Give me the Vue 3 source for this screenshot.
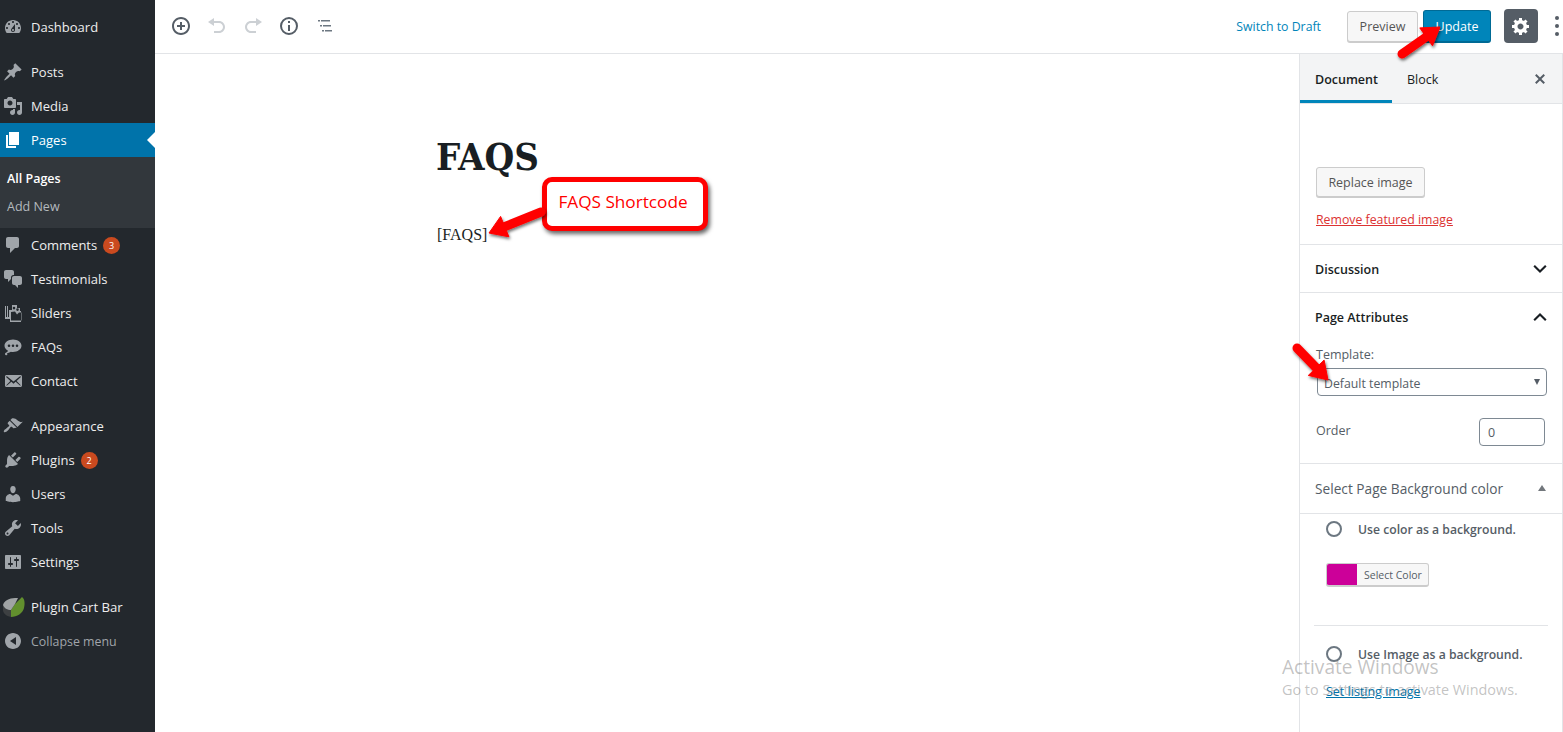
<script setup>
const I = {
  dashboard: 'M3.76 16h12.48c1.1-1.37 1.76-3.11 1.76-5 0-4.42-3.58-8-8-8s-8 3.58-8 8c0 1.89.66 3.63 1.76 5zM10 4c.55 0 1 .45 1 1s-.45 1-1 1-1-.45-1-1 .45-1 1-1zM6 6c.55 0 1 .45 1 1s-.45 1-1 1-1-.45-1-1 .45-1 1-1zm8 0c.55 0 1 .45 1 1s-.45 1-1 1-1-.45-1-1 .45-1 1-1zm-5.37 5.55L12 7v6c0 1.1-.9 2-2 2s-2-.9-2-2c0-.57.24-1.08.63-1.45zM4 10c.55 0 1 .45 1 1s-.45 1-1 1-1-.45-1-1 .45-1 1-1zm12 0c.55 0 1 .45 1 1s-.45 1-1 1-1-.45-1-1 .45-1 1-1zm-5 3c0-.55-.45-1-1-1s-1 .45-1 1 .45 1 1 1 1-.45 1-1z',
  pin: 'M10.44 3.02l1.82-1.82 6.36 6.35-1.83 1.82c-1.05-.68-2.48-.57-3.41.36l-.75.75c-.92.93-1.04 2.35-.35 3.41l-1.83 1.82-2.41-2.41-2.8 2.79c-.42.42-3.38 2.71-3.8 2.29s1.86-3.39 2.28-3.81l2.79-2.79L4.1 9.36l1.83-1.82c1.05.69 2.48.57 3.4-.36l.75-.75c.93-.92 1.05-2.35.36-3.41z',
  media: 'M13 11V4c0-.55-.45-1-1-1h-1.67L9 1H5L3.67 3H2c-.55 0-1 .45-1 1v7c0 .55.45 1 1 1h10c.55 0 1-.45 1-1zM7 4.5c1.38 0 2.5 1.12 2.5 2.5S8.38 9.5 7 9.5 4.5 8.38 4.5 7 5.62 4.5 7 4.5zM14 6h5v10.5c0 1.38-1.12 2.5-2.5 2.5S14 17.88 14 16.5s1.12-2.5 2.5-2.5c.17 0 .34.02.5.05V9h-3V6zm-4 8.05V13h2v3.5c0 1.38-1.12 2.5-2.5 2.5S7 17.88 7 16.5 8.12 14 9.5 14c.17 0 .34.02.5.05z',
  page: 'M6 15V2h10v13H6zm-1 1h8v2H3V5h2v11z',
  comment: 'M5 2h9c1.1 0 2 .9 2 2v7c0 1.1-.9 2-2 2h-2l-5 5v-5H5c-1.1 0-2-.9-2-2V4c0-1.1.9-2 2-2z',
  chat: 'M11 6h-.82C9.07 6 8 7.2 8 8.16V10l-3 3v-3H3c-1.1 0-2-.9-2-2V3c0-1.1.9-2 2-2h6c1.1 0 2 .9 2 2v3zm0 1h6c1.1 0 2 .9 2 2v5c0 1.1-.9 2-2 2h-2v3l-3-3h-1c-1.1 0-2-.9-2-2V9c0-1.1.9-2 2-2z',
  slides: 'M2 3h1v11h1V3h1v11h1V7h3V2h5v3h3v3h1v11H7v-3H2zM8 9v8.500h10.500V9.500H16l-2 2-2-3zM11 3.800a1.300 1.300 0 1 0 0 2.600 1.300 1.300 0 0 0 0-2.600zm3.500 1.500a1.300 1.300 0 1 0 0 2.600 1.300 1.300 0 0 0 0-2.600z',
  bubble: 'M10 2.5c-4.7 0-8.500 2.800-8.500 6.200 0 2.100 1.400 3.900 3.500 5-.4 1-1.300 1.900-2.500 2.300 2 .3 4-.3 5.400-1.300.7.100 1.400.2 2.100.2 4.700 0 8.500-2.800 8.500-6.200S14.700 2.500 10 2.500zM6 7.500a1.300 1.300 0 1 1 0 2.600 1.300 1.300 0 0 1 0-2.600zm4 0a1.300 1.300 0 1 1 0 2.600 1.300 1.300 0 0 1 0-2.600zm4 0a1.300 1.300 0 1 1 0 2.600 1.300 1.300 0 0 1 0-2.600zM2 17a1.200 1.200 0 1 0 2.400 0A1.200 1.200 0 0 0 2 17z',
  mail: 'M19 14.5v-9c0-.83-.67-1.5-1.500-1.500H3.490c-.83 0-1.500.67-1.500 1.500v9c0 .83.67 1.500 1.500 1.500H17.500c.83 0 1.500-.67 1.500-1.500zm-1.310-9.110c.33.33.15.67-.03.84L13.600 9.950l3.900 4.060c.12.14.2.36.06.51-.13.16-.43.15-.56.05l-4.370-3.730-2.140 1.950-2.130-1.950-4.370 3.730c-.13.1-.43.11-.56-.05-.14-.15-.06-.37.06-.51l3.900-4.060-4.060-3.720c-.18-.17-.36-.51-.03-.84s.67-.17.95.07l6.240 5.040 6.250-5.040c.28-.24.62-.4.95-.07z',
  brush: 'M14.480 11.060L7.410 3.990l1.500-1.500c.5-.56 2.300-.47 3.510.32 1.210.8 1.430 1.280 2.910 2.100 1.180.64 2.450 1.260 4.450.85zm-.71.71L6.700 4.700 4.930 6.470c-.39.39-.39 1.020 0 1.410l1.060 1.060c.39.39.39 1.030 0 1.420-.6.6-1.430 1.110-2.210 1.690-.35.26-.7.53-1.010.84C1.430 13.230.2 15.200 1 16c.8.800 2.770-.43 4.110-1.770.31-.31.58-.66.84-1.010.58-.78 1.090-1.610 1.690-2.210.39-.39 1.030-.39 1.420 0l1.060 1.060c.39.39 1.020.39 1.410 0z',
  plug: 'M13.110 4.360L9.870 7.600 8 5.730l3.240-3.240c.35-.34 1.050-.2 1.560.32.52.51.66 1.210.31 1.550zm-8 1.770l.91-1.120 9.010 9.010-1.190.84c-.71.71-2.630 1.160-3.820 1.160H6.140L4.900 17.260c-.59.59-1.540.59-2.120 0-.59-.58-.59-1.530 0-2.120l1.240-1.240v-3.880c0-1.130.4-3.190 1.090-3.890zm7.260 3.970l3.240-3.240c.34-.35 1.040-.21 1.550.31.52.51.66 1.210.31 1.550l-3.240 3.250z',
  user: 'M10 9.250c-2.270 0-2.730-3.440-2.730-3.440C7 4.020 7.820 2 9.970 2c2.160 0 2.980 2.020 2.710 3.810 0 0-.41 3.440-2.680 3.440zm0 2.570L12.720 10c2.390 0 4.520 2.330 4.520 4.530v2.490s-3.650 1.130-7.240 1.130c-3.650 0-7.240-1.130-7.240-1.130v-2.490c0-2.250 1.940-4.480 4.470-4.480z',
  tool: 'M16.680 9.770c-1.340 1.340-3.300 1.670-4.950.99l-5.410 6.520c-.99.99-2.590.99-3.580 0s-.99-2.590 0-3.570l6.520-5.420c-.68-1.650-.35-3.610.99-4.950 1.280-1.280 3.120-1.620 4.720-1.060l-2.890 2.890 2.820 2.820 2.860-2.870c.53 1.580.18 3.390-1.080 4.650zM3.810 16.210c.4.39 1.040.39 1.430 0 .4-.4.4-1.040 0-1.430-.39-.4-1.030-.4-1.430 0-.39.39-.39 1.030 0 1.430z',
  settings: 'M18 16V4c0-.55-.45-1-1-1H3c-.55 0-1 .45-1 1v12c0 .55.45 1 1 1h14c.55 0 1-.45 1-1zM8 11h1c.55 0 1 .45 1 1s-.45 1-1 1H8v1.500c0 .28-.22.5-.5.5s-.5-.22-.5-.5V13H6c-.55 0-1-.45-1-1s.45-1 1-1h1V5.500c0-.28.22-.5.5-.5s.5.22.5.5V11zm5-2h-1c-.55 0-1-.45-1-1s.45-1 1-1h1V5.500c0-.28.22-.5.5-.5s.5.22.5.5V7h1c.55 0 1 .45 1 1s-.45 1-1 1h-1v5.500c0 .28-.22.5-.5.5s-.5-.22-.5-.5V9z',
  collapse: 'M18 10c0-4.420-3.580-8-8-8s-8 3.580-8 8 3.580 8 8 8 8-3.580 8-8zm-5-4v8L7 10z'
}
const groups = [
  [{ label: 'Dashboard', icon: I.dashboard }],
  [
    { label: 'Posts', icon: I.pin },
    { label: 'Media', icon: I.media },
    { label: 'Pages', icon: I.page, active: true, sub: ['All Pages', 'Add New'] },
    { label: 'Comments', icon: I.comment, badge: 3 },
    { label: 'Testimonials', icon: I.chat },
    { label: 'Sliders', icon: I.slides },
    { label: 'FAQs', icon: I.bubble },
    { label: 'Contact', icon: I.mail }
  ],
  [
    { label: 'Appearance', icon: I.brush },
    { label: 'Plugins', icon: I.plug, badge: 2 },
    { label: 'Users', icon: I.user },
    { label: 'Tools', icon: I.tool },
    { label: 'Settings', icon: I.settings }
  ]
]
const toolIcons = [
  { d: 'M10 1c-5 0-9 4-9 9s4 9 9 9 9-4 9-9-4-9-9-9zm0 16c-3.900 0-7-3.100-7-7s3.100-7 7-7 7 3.100 7 7-3.100 7-7 7zm1-11H9v3H6v2h3v3h2v-3h3V9h-3V6z', off: false },
  { d: 'M12 5H7V2L1 6l6 4V7h5c2.200 0 4 1.800 4 4s-1.800 4-4 4H7v2h5c3.300 0 6-2.700 6-6s-2.700-6-6-6z', off: true },
  { d: 'M8 5h5V2l6 4-6 4V7H8c-2.200 0-4 1.800-4 4s1.800 4 4 4h5v2H8c-3.300 0-6-2.700-6-6s2.700-6 6-6z', off: true },
  { d: 'M10 1a9 9 0 1 0 0 18 9 9 0 0 0 0-18zm0 16a7 7 0 1 1 0-14 7 7 0 0 1 0 14zM9 9h2v6H9zM9 5h2v2H9z', off: false },
  { d: 'M3 4h2v1.500H3zM6 4h9v1.500H6zM5 9h2v1.500H5zM8 9h8v1.500H8zM7 14h2v1.500H7zM10 14h7v1.500h-7z', off: false, muted: true }
]
function arrow(x1, y1, x2, y2, w, hl, hw) {
  const len = Math.hypot(x2 - x1, y2 - y1)
  const ux = (x2 - x1) / len, uy = (y2 - y1) / len
  const px = -uy, py = ux
  const nx = x2 - ux * hl, ny = y2 - uy * hl
  const f = n => n.toFixed(1)
  const head = `${f(x2)},${f(y2)} ${f(nx + px * hw)},${f(ny + py * hw)} ${f(nx - px * hw)},${f(ny - py * hw)}`
  return { x1, y1, nx: f(nx + ux), ny: f(ny + uy), w, head }
}
const arrows = [
  arrow(1402, 54, 1440, 27, 9, 17, 11),
  arrow(1297, 348, 1328, 380, 9, 17, 11),
  arrow(541, 212, 489, 233, 9, 17, 11)
]
</script>

<template>
  <div class="page">
    <aside class="sidebar">
      <ul v-for="(group, g) in groups" :key="g" class="menu-group">
        <li v-for="item in group" :key="item.label">
          <div class="menu-item" :class="{ active: item.active }">
            <svg class="menu-icon" viewBox="0 0 20 20"><path :d="item.icon" fill-rule="evenodd" /></svg>
            <span>{{ item.label }}</span>
            <span v-if="item.badge" class="badge">{{ item.badge }}</span>
          </div>
          <ul v-if="item.sub" class="submenu">
            <li v-for="(s, i) in item.sub" :key="s" :class="{ current: i === 0 }">{{ s }}</li>
          </ul>
        </li>
      </ul>
      <ul class="menu-group">
        <li>
          <div class="menu-item cart">
            <svg class="cart-icon" viewBox="0 0 22 22">
              <path d="M0 9v5c0 3 3 6 8 7V14C4 14 1 12 0 9z" fill="#3d4042" />
              <path d="M8 14l4-6 7-7c3 2 3 7 2 11-1 5-7 9-13 9z" fill="#62902e" />
              <path d="M0 9c1-4 6-7 12-7h3l-3 6-4 6C4 14 1 12 0 9z" fill="#a0a4a5" />
            </svg>
            <span>Plugin Cart Bar</span>
          </div>
        </li>
        <li>
          <div class="menu-item collapse">
            <svg class="menu-icon" viewBox="0 0 20 20"><path :d="I.collapse" fill-rule="evenodd" /></svg>
            <span>Collapse menu</span>
          </div>
        </li>
      </ul>
    </aside>

    <div class="main">
      <header class="topbar">
        <div class="tools">
          <button v-for="(t, i) in toolIcons" :key="i" class="tool" :class="{ off: t.off, muted: t.muted }">
            <svg viewBox="0 0 20 20" width="20" height="20"><path :d="t.d" /></svg>
          </button>
        </div>
        <div class="actions">
          <a class="draft">Switch to Draft</a>
          <button class="btn preview">Preview</button>
          <button class="update">Update</button>
          <button class="gear">
            <svg viewBox="0 0 20 20" width="20" height="20"><path fill-rule="evenodd" d="M18 12h-2.180c-.17.7-.44 1.350-.81 1.930l1.540 1.540-2.100 2.100-1.540-1.540c-.58.36-1.230.63-1.910.79V19H8v-2.180c-.68-.16-1.330-.43-1.910-.79l-1.540 1.540-2.120-2.120 1.540-1.540c-.36-.58-.63-1.230-.79-1.910H1V9.030h2.170c.16-.7.44-1.340.8-1.940L2.430 5.550l2.100-2.100 1.540 1.540c.58-.37 1.240-.64 1.930-.81V2h3v2.180c.68.16 1.330.43 1.910.79l1.540-1.540 2.120 2.120-1.540 1.540c.36.580.63 1.230.79 1.910H18V12zm-8.500 1.500c1.660 0 3-1.340 3-3s-1.340-3-3-3-3 1.340-3 3 1.340 3 3 3z" /></svg>
          </button>
          <div class="dots"><i></i><i></i><i></i></div>
        </div>
      </header>

      <div class="workspace">
        <main class="editor">
          <h1>FAQS</h1>
          <p>[FAQS]</p>
        </main>

        <aside class="panel">
          <div class="tabs">
            <div class="tab selected">Document</div>
            <div class="tab">Block</div>
            <svg class="close" viewBox="0 0 20 20" width="20" height="20"><path d="M14.950 6.460L11.410 10l3.540 3.540-1.410 1.410L10 11.420l-3.530 3.530-1.420-1.420L8.580 10 5.050 6.470l1.420-1.420L10 8.580l3.540-3.530z" /></svg>
          </div>

          <section class="featured">
            <button class="btn replace">Replace image</button>
            <a class="remove">Remove featured image</a>
          </section>

          <section class="row-head discussion">
            <span>Discussion</span>
            <svg viewBox="0 0 24 24" width="20" height="20" class="chev"><path d="M5 8l7 7 7-7" /></svg>
          </section>

          <section class="attributes">
            <div class="row-head plain">
              <span>Page Attributes</span>
              <svg viewBox="0 0 24 24" width="20" height="20" class="chev"><path d="M5 16l7-7 7 7" /></svg>
            </div>
            <label class="tpl-label">Template:</label>
            <div class="select"><span>Default template</span><i class="down"></i></div>
            <div class="order">
              <label>Order</label>
              <div class="num">0</div>
            </div>
          </section>

          <section class="bg-head">
            <span>Select Page Background color</span>
            <i class="up"></i>
          </section>

          <section class="bg-body">
            <div class="radio-row"><i class="radio"></i><span>Use color as a background.</span></div>
            <div class="color-btn"><i class="swatch"></i><span>Select Color</span></div>
            <hr />
            <div class="radio-row second"><i class="radio"></i><span>Use Image as a background.</span></div>
            <a class="listing">Set listing image</a>
          </section>
        </aside>
      </div>
    </div>

    <div class="callout">FAQS Shortcode</div>

    <svg class="arrows" width="1563" height="732" viewBox="0 0 1563 732">
      <defs>
        <filter id="sh" x="-30%" y="-30%" width="170%" height="170%">
          <feDropShadow dx="1" dy="2" stdDeviation="1.500" flood-color="#000" flood-opacity=".55" />
        </filter>
      </defs>
      <g v-for="(a, i) in arrows" :key="i" filter="url(#sh)" fill="#f00" stroke="#f00">
        <line :x1="a.x1" :y1="a.y1" :x2="a.nx" :y2="a.ny" :stroke-width="a.w" stroke-linecap="round" />
        <polygon :points="a.head" stroke-width="1" />
      </g>
    </svg>

    <div class="watermark">
      <div class="wm-title">Activate Windows</div>
      <div class="wm-sub">Go to Settings to activate Windows.</div>
    </div>
  </div>
</template>

<style scoped>
* { box-sizing: border-box; }
ul { list-style: none; margin: 0; padding: 0; }
button { font-family: inherit; cursor: pointer; }
.page {
  position: relative; display: flex; width: 1563px; height: 732px; overflow: hidden;
  background: #fff; color: #191e23;
  font-family: "Open Sans", "Noto Sans", sans-serif; font-size: 13px;
}
.sidebar { width: 155px; flex: none; background: #23282d; padding-top: 10px; }
.menu-group { margin-bottom: 11px; }
.menu-item {
  position: relative; display: flex; align-items: center; height: 34px; padding-left: 3px;
  color: #eee; font-size: 13px;
}
.menu-icon { width: 20px; height: 20px; margin-right: 8px; fill: #a0a5aa; flex: none; }
.cart-icon { width: 22px; height: 22px; margin-right: 6px; flex: none; }
.menu-item.cart { font-size: 13.200px; }
.menu-item.active { background: #0073aa; color: #fff; }
.menu-item.active .menu-icon { fill: #fff; }
.menu-item.active::after {
  content: ""; position: absolute; right: 0; top: 9px;
  border: 8px solid transparent; border-right-color: #fff; border-left-width: 0;
}
.badge {
  display: inline-flex; align-items: center; justify-content: center; width: 17px; height: 17px;
  margin-left: 6px; border-radius: 50%; background: #ca4a1f; color: #fff; font-size: 9px;
}
.submenu { background: #32373c; height: 71px; padding: 8px 0 0 7px; color: #b4b9be; font-size: 12.500px; }
.submenu li { height: 28px; line-height: 27px; }
.submenu .current { color: #fff; font-weight: 600; }
.collapse { color: #a0a5aa; font-size: 12.400px; }

.main { flex: 1; min-width: 0; display: flex; flex-direction: column; }
.topbar {
  height: 54px; flex: none; display: flex; justify-content: space-between; align-items: center;
  border-bottom: 1px solid #e2e4e7; padding: 0 0 1px 8px;
}
.tools { display: flex; }
.tool { width: 36px; height: 36px; padding: 0; background: none; border: 0; display: flex; align-items: center; justify-content: center; }
.tool svg { fill: #555d66; }
.tool.off svg { fill: #ccd0d4; }
.tool.muted svg { fill: #6c7781; }
.actions { display: flex; align-items: center; }
.draft { color: #0085ba; font-size: 12.300px; margin-right: 26px; }
.btn {
  background: #f7f7f7; color: #555; border: 1px solid #ccc; border-radius: 3px;
  box-shadow: 0 1px 0 #ccc; font-size: 12.500px;
}
.preview { width: 71px; height: 31px; padding: 0; margin-right: 5px; }
.update {
  width: 68px; height: 33px; padding: 1px 0 0; margin-right: 13px; border-radius: 3px; color: #fff; font-size: 12.500px;
  background: #0085ba; border: 1px solid #006a95; border-bottom-width: 2px;
}
.gear {
  width: 34px; height: 34px; padding: 0; border: 0; border-radius: 4px; background: #555d66;
  display: flex; align-items: center; justify-content: center; margin-right: 17px;
}
.gear svg { fill: #fff; }
.dots { display: flex; flex-direction: column; gap: 4px; width: 8px; }
.dots i { width: 4px; height: 4px; border-radius: 50%; background: #555d66; }

.workspace { flex: 1; min-height: 0; display: flex; }
.editor { flex: 1; padding: 79px 0 0 282px; }
.editor h1 {
  margin: 0 0 0 -1px; font: 700 38px/48px "DejaVu Serif Condensed", "DejaVu Serif", serif; font-stretch: condensed; color: #191e23;
}
.editor p { margin: 42px 0 0; font: 16px/24px "Liberation Serif", serif; color: #191e23; }

.panel { width: 264px; flex: none; border-left: 1px solid #e2e4e7; border-right: 1px solid #e2e4e7; }
.tabs { position: relative; display: flex; height: 50px; background: #f3f4f5; border-bottom: 1px solid #e2e4e7; }
.tab { height: 49px; padding: 0 15px; line-height: 52px; font-size: 12.500px; color: #191e23; }
.tab.selected { width: 92px; font-weight: 600; border-bottom: 3px solid #0085ba; }
.close { position: absolute; right: 12px; top: 15px; fill: #555d66; }
.featured { height: 141px; padding: 63px 0 0 16px; border-bottom: 1px solid #e2e4e7; display: flex; flex-direction: column; align-items: flex-start; }
.replace { width: 109px; height: 30px; padding: 0; }
.remove { margin-top: 14px; color: #dc3232; font-size: 12.300px; text-decoration: underline; }
.row-head { display: flex; align-items: center; justify-content: space-between; padding: 0 12px 0 15px; font-weight: 600; font-size: 12.500px; color: #191e23; }
.discussion { height: 48px; padding-top: 2px; border-bottom: 1px solid #e2e4e7; }
.discussion .chev { margin-top: -2px; }
.row-head.plain { height: 48px; }
.chev { fill: none; stroke: #191e23; stroke-width: 2.500; }
.attributes { height: 171px; border-bottom: 1px solid #e2e4e7; }
.tpl-label { display: block; padding-left: 16px; margin-top: 4px; line-height: 20px; color: #555d66; font-size: 12.500px; }
.select {
  display: flex; align-items: center; justify-content: space-between; width: 230px; height: 28px; margin: 3px 0 0 17px;
  padding: 0 6px 0 6px; border: 1px solid #7e8993; border-radius: 4px; font-size: 12.300px; color: #555d66;
}
.select span { position: relative; top: 1px; }
.down { border: 3.500px solid transparent; border-top: 6px solid #555d66; border-bottom-width: 0; }
.order { display: flex; justify-content: space-between; margin: 22px 17px 0 16px; color: #555d66; font-size: 12.500px; }
.order label { margin-top: 4px; }
.num { width: 66px; height: 28px; border: 1px solid #7e8993; border-radius: 4px; padding-left: 8px; line-height: 28px; }
.bg-head {
  height: 50px; display: flex; align-items: center; justify-content: space-between; padding: 0 16px 0 15px;
  border-bottom: 1px solid #e2e4e7; color: #555d66; font-weight: 500; font-size: 13.700px;
}
.up { border: 4.500px solid transparent; border-bottom: 6px solid #72777c; border-top-width: 0; margin-top: -1px; }
.bg-body { position: relative; padding-left: 26px; color: #555d66; font-size: 12.200px; }
.radio-row { display: flex; align-items: center; height: 20px; margin-top: 5px; font-weight: 600; }
.radio { width: 16px; height: 16px; border: 2px solid #6c7781; border-radius: 50%; margin-right: 16px; flex: none; }
.color-btn {
  display: flex; width: 103px; height: 24px; margin-top: 24px; border: 1px solid #ccc; border-bottom-width: 2px; border-radius: 3px; overflow: hidden;
  background: #f7f7f7; font-size: 10.500px; align-items: center;
}
.swatch { width: 30px; height: 100%; background: #cc0099; margin-right: 7px; }
hr { border: 0; border-top: 1px solid #e2e4e7; margin: 38px 14px 0 -12px; }
.radio-row.second { margin-top: 18px; }
.listing { display: inline-block; margin-top: 19px; color: #0073aa; text-decoration: underline; font-size: 12.500px; }

.callout {
  position: absolute; left: 542px; top: 177px; width: 166px; height: 54px;
  display: flex; align-items: center; justify-content: center; padding: 0 4px 5px 0;
  background: #fff; border: 5px solid #f00; border-radius: 10px; color: #f00; font-size: 17.200px;
  box-shadow: 2px 3px 4px rgba(0, 0, 0, .6);
}
.arrows { position: absolute; left: 0; top: 0; pointer-events: none; }
.watermark { position: absolute; left: 1282px; top: 655px; color: rgba(110, 110, 110, .42); pointer-events: none; }
.wm-title { font-size: 19.100px; line-height: 24px; }
.wm-sub { font-size: 14.400px; line-height: 22px; }
</style>

<style>
html, body { margin: 0; overflow: hidden; }
</style>
